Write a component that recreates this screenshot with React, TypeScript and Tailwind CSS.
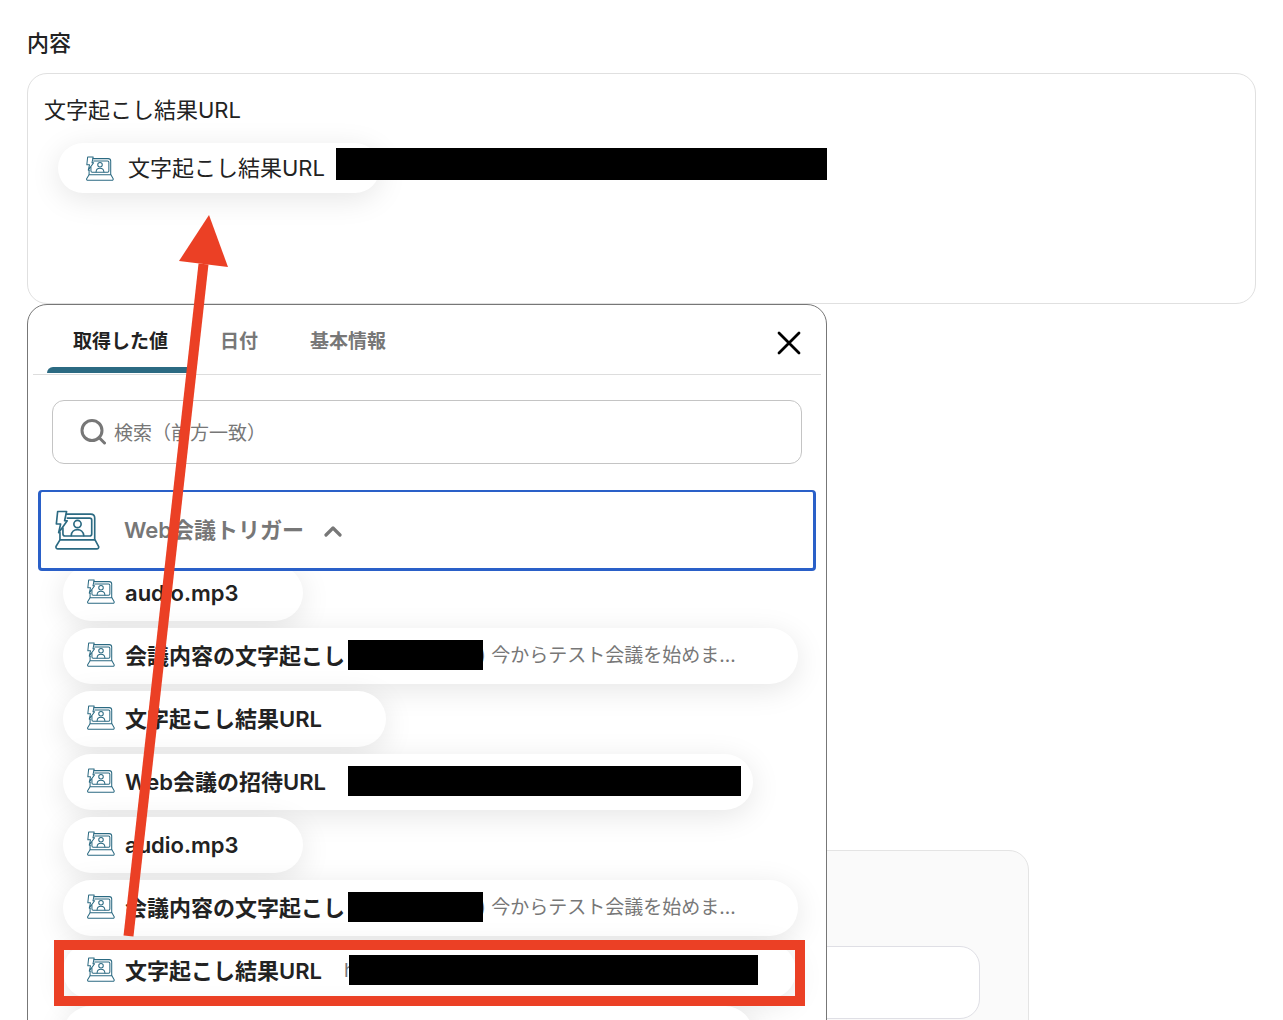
import React, { useState } from 'react';

type Value = {
  name?: string;
  maskClass?: string;
  before?: string;
  after?: string;
  sizeClass: string;
};

const TABS = ['取得した値', '日付', '基本情報'];

const VALUES: Value[] = [
  { name: 'audio.mp3', sizeClass: 'pr-16' },
  { name: '会議内容の文字起こし', maskClass: 'ml-[3px] w-[135px] h-[30px]', after: ') 今からテスト会議を始めま...', sizeClass: 'pr-[62px]' },
  { name: '文字起こし結果URL', sizeClass: 'pr-16' },
  { name: 'Web会議の招待URL', maskClass: 'ml-[22px] w-[393px] h-[30px]', sizeClass: 'pr-3' },
  { name: 'audio.mp3', sizeClass: 'pr-16' },
  { name: '会議内容の文字起こし', maskClass: 'ml-[3px] w-[135px] h-[30px]', after: ') 今からテスト会議を始めま...', sizeClass: 'pr-[62px]' },
  { name: '文字起こし結果URL', before: 'h', maskClass: '-ml-1.5 w-[409px] h-[30px]', sizeClass: 'pr-[38px]' },
  { sizeClass: 'w-[690px]' },
];

const MeetingIcon = ({ className }: { className: string }) => (
  <svg
    viewBox="16 30 136 120"
    className={className}
    fill="none"
    stroke="#2b6a82"
    strokeWidth="5"
    strokeLinejoin="round"
    strokeLinecap="round"
    aria-hidden="true"
  >
    <path d="M50 42H124Q136 42 136 54V119" />
    <path d="M53 54H121Q127 54 127 60V102Q127 108 121 108H46Q40 108 40 102V84" />
    <path d="M31 98V119" />
    <path d="M31 120H137L148 140Q149 147 142 147H25Q18 147 19 140Z" />
    <path d="M24 34H51L45 62H53L27 98L33 72H20Z" />
    <circle cx="84" cy="72" r="11" />
    <path d="M65 107C66 83 101 83 103 107" />
  </svg>
);

// Black bar that hides a private value
const Mask = ({ className }: { className: string }) => (
  <span className={`relative block shrink-0 bg-black ${className}`} />
);

const ValueChip = ({ value }: { value: Value }) => (
  <button
    type="button"
    aria-label={value.name ? undefined : '値'}
    className={`flex h-14 items-center whitespace-nowrap rounded-full bg-white pl-6 shadow-[0_6px_30px_rgba(0,0,0,0.1)] ${value.sizeClass}`}
  >
    <MeetingIcon className="mb-1 mr-2.5 h-[25px] w-7 shrink-0" />
    {value.name && <span className="text-[22px] font-semibold text-[#222]">{value.name}</span>}
    {value.before && <span className="ml-[22px] text-[19px] text-[#777]">{value.before}</span>}
    {value.maskClass && <Mask className={`mb-0.5 ${value.maskClass}`} />}
    {value.after && <span className="-ml-1 text-[19px] text-[#777]">{value.after}</span>}
  </button>
);

const ValuePicker = () => {
  const [tab, setTab] = useState(0);
  const [open, setOpen] = useState(true);

  return (
    <div className="absolute left-0 top-full z-10 h-screen w-[800px] max-w-full overflow-hidden rounded-t-[20px] border border-[#777] bg-white">
      {/* Tabs */}
      <div className="mx-[5px] flex h-[70px] items-stretch border-b border-[#ddd] pl-3.5 pr-4">
        {TABS.map((name, i) => (
          <button
            key={name}
            type="button"
            onClick={() => setTab(i)}
            className={`relative px-[26px] pt-1.5 text-[19px] font-semibold ${i === tab ? 'text-[#222]' : 'text-[#777]'}`}
          >
            {name}
            {i === tab && <span className="absolute inset-x-0 bottom-px h-1.5 rounded-t-md bg-[#2b6a82]" />}
          </button>
        ))}
        <button type="button" aria-label="閉じる" className="ml-auto pt-1.5">
          <svg viewBox="0 0 32 32" className="size-8" stroke="#000" strokeWidth="2.8" strokeLinecap="round">
            <path d="M6 6L26 26M26 6L6 26" />
          </svg>
        </button>
      </div>

      {/* Search */}
      <label className="mx-6 mt-[25px] flex h-16 items-center rounded-xl border border-[#c4c4c4] pl-[27px]">
        <svg viewBox="0 0 26 26" className="size-[26px] shrink-0" fill="none" stroke="#777" strokeWidth="3" strokeLinecap="round">
          <circle cx="12" cy="11.5" r="10" />
          <path d="M19 18.5L24.5 24" />
        </svg>
        <input
          type="text"
          aria-label="検索"
          placeholder="検索（前方一致）"
          className="ml-2 min-w-0 flex-1 bg-transparent pt-1 text-[19px] outline-none placeholder:text-[#777]"
        />
      </label>

      {/* Trigger group */}
      <button
        type="button"
        aria-expanded={open}
        onClick={() => setOpen(!open)}
        className="relative z-10 ml-2.5 mt-[26px] flex h-[81px] w-[778px] max-w-full items-center rounded-[4px] border-[3px] border-t-2 border-[#2a60c8] bg-white pl-3.5"
      >
        <MeetingIcon className="h-10 w-[45px]" />
        <span className="ml-6 text-[22px] font-semibold text-[#777]">Web会議トリガー</span>
        <svg viewBox="0 0 18 12" className="ml-5 mt-0.5 h-3 w-[18px]" fill="none" stroke="#777" strokeWidth="3.2" strokeLinecap="round" strokeLinejoin="round">
          <path d="M2 10L9 3L16 10" />
        </svg>
      </button>
      {open && (
        <div className="-mt-1.5 flex flex-col items-start gap-[7px] pl-[35px]">
          {VALUES.map((value, i) => (
            <ValueChip key={i} value={value} />
          ))}
        </div>
      )}
    </div>
  );
};

export default function App() {
  return (
    <main className="relative h-screen overflow-hidden bg-white px-[27px] pt-[26px] font-['Inter','Noto_Sans_CJK_JP',sans-serif]">
      <h2 id="content-label" className="text-[22px] font-medium leading-[34px] text-[#222]">内容</h2>

      <div className="relative mt-[13px]">
        <div
          role="textbox"
          aria-multiline="true"
          aria-labelledby="content-label"
          className="h-[231px] rounded-[20px] border border-[#e0e0e0] px-4 pt-5 text-[22px] leading-8 text-[#222]"
        >
          <p>文字起こし結果URL</p>
          <div className="ml-3.5 mt-[17px] flex items-start">
            <span className="-mr-11 flex h-[50px] w-[322px] items-center whitespace-nowrap rounded-full bg-white pl-7 shadow-[0_6px_30px_rgba(0,0,0,0.1)]">
              <MeetingIcon className="mr-3.5 h-[25px] w-7 shrink-0" />
              文字起こし結果URL
            </span>
            <Mask className="mt-[5px] h-8 w-[491px]" />
          </div>
        </div>
        <ValuePicker />
      </div>

      {/* Next form block, mostly covered by the picker */}
      <section className="mt-[546px] h-[300px] w-[1002px] max-w-full rounded-[20px] border border-[#e4e4e4] bg-[#fafafa] px-12 pt-[95px]">
        <input
          type="text"
          aria-label="入力"
          className="h-[73px] w-full rounded-[20px] border border-[#dfdfe5] bg-white px-4 outline-none"
        />
      </section>

      {/* Guide arrow and frame */}
      <svg width="1283" height="1020" className="pointer-events-none absolute left-0 top-0 z-20" aria-hidden="true">
        <path d="M128.5 936L203.5 264" stroke="#eb4025" strokeWidth="10" />
        <path d="M209 215L228 267L179 261Z" fill="#eb4025" />
        <rect x="59" y="945" width="741" height="56" fill="none" stroke="#eb4025" strokeWidth="10" />
      </svg>
    </main>
  );
}
